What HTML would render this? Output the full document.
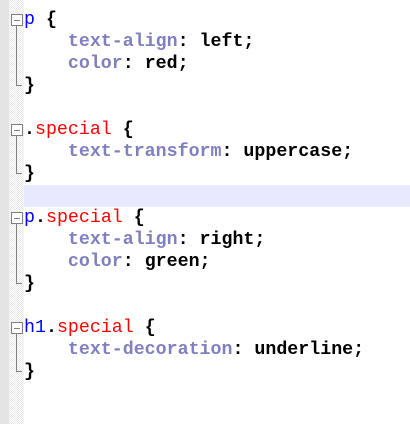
<html><head><style>
body{margin:0;width:410px;height:424px;background:#fff;position:relative;overflow:hidden;font-family:"Liberation Mono","Courier New",monospace;font-size:18.3px}
.g1{position:absolute;left:0;top:0;width:9px;height:424px;background:#e4e4e4}
.g2{position:absolute;left:9px;top:0;width:15px;height:424px;background-image:repeating-conic-gradient(#e8e8e8 0 25%,#fff 0 50%);background-size:2px 2px}
.hl{position:absolute;left:24px;width:386px;top:185px;height:22px;background:#e8e8ff}
.l{position:absolute;left:24px;height:22px;line-height:22px;white-space:pre;font-weight:bold;color:#000}
.s{color:#0000ff;font-weight:normal}.c{color:#ff0000;font-weight:normal}.p{color:#8080c0}.b{color:#000}
.box{position:absolute;left:11px;width:10px;height:10px;border:1px solid #808080;background:#fff}
.box:after{content:"";position:absolute;left:2px;top:5px;width:6px;height:1px;background:#808080}
.vl{position:absolute;left:16px;width:1px;background:#808080}
.hz{position:absolute;left:16px;width:6px;height:1px;background:#808080}
</style></head><body>
<div class="g1"></div><div class="g2"></div><div class="hl"></div>
<div class="box" style="top:14px"></div><div class="vl" style="top:26px;height:59px"></div><div class="hz" style="top:85px"></div>
<div class="box" style="top:124px"></div><div class="vl" style="top:136px;height:37px"></div><div class="hz" style="top:173px"></div>
<div class="box" style="top:212px"></div><div class="vl" style="top:224px;height:59px"></div><div class="hz" style="top:283px"></div>
<div class="box" style="top:322px"></div><div class="vl" style="top:334px;height:37px"></div><div class="hz" style="top:371px"></div>
<div class="l" style="top:9px"><span class="s">p</span> {</div>
<div class="l" style="top:31px">    <span class="p">text-align</span>: left;</div>
<div class="l" style="top:53px">    <span class="p">color</span>: red;</div>
<div class="l" style="top:75px">}</div>
<div class="l" style="top:119px">.<span class="c">special</span> {</div>
<div class="l" style="top:141px">    <span class="p">text-transform</span>: uppercase;</div>
<div class="l" style="top:163px">}</div>
<div class="l" style="top:207px"><span class="s">p</span>.<span class="c">special</span> {</div>
<div class="l" style="top:229px">    <span class="p">text-align</span>: right;</div>
<div class="l" style="top:251px">    <span class="p">color</span>: green;</div>
<div class="l" style="top:273px">}</div>
<div class="l" style="top:317px"><span class="s">h1</span>.<span class="c">special</span> {</div>
<div class="l" style="top:339px">    <span class="p">text-decoration</span>: underline;</div>
<div class="l" style="top:361px">}</div>
</body></html>
